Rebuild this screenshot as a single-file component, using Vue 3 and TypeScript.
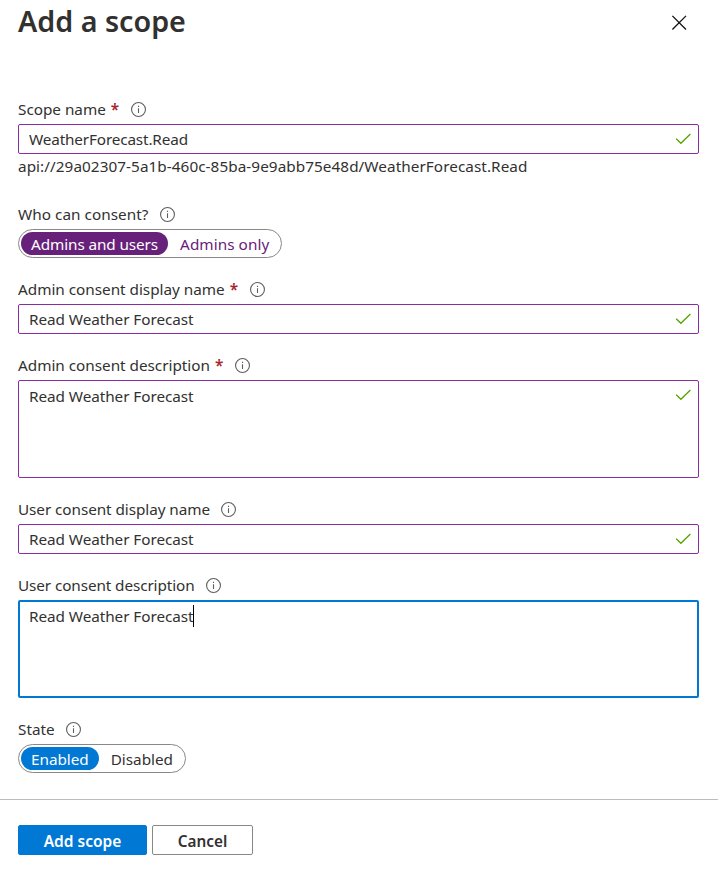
<script setup lang="ts">
import { ref } from 'vue'

interface Field {
  id: string
  label: string
  required?: boolean
  kind: 'input' | 'area' | 'toggle'
  value?: string
  valid?: boolean
  focused?: boolean
  hint?: string
  options?: string[]
}

const fields = ref<Field[]>([
  { id: 'scope-name', label: 'Scope name', required: true, kind: 'input', value: 'WeatherForecast.Read', valid: true, hint: 'api://29a02307-5a1b-460c-85ba-9e9abb75e48d/WeatherForecast.Read' },
  { id: 'consent', label: 'Who can consent?', kind: 'toggle', value: 'Admins and users', options: ['Admins and users', 'Admins only'] },
  { id: 'admin-name', label: 'Admin consent display name', required: true, kind: 'input', value: 'Read Weather Forecast', valid: true },
  { id: 'admin-description', label: 'Admin consent description', required: true, kind: 'area', value: 'Read Weather Forecast', valid: true },
  { id: 'user-name', label: 'User consent display name', kind: 'input', value: 'Read Weather Forecast', valid: true },
  { id: 'user-description', label: 'User consent description', kind: 'area', value: 'Read Weather Forecast', focused: true },
  { id: 'state', label: 'State', kind: 'toggle', value: 'Enabled', options: ['Enabled', 'Disabled'] },
])
</script>

<template>
  <main class="panel">
    <header class="header">
      <h1>Add a scope</h1>
      <svg class="close" viewBox="0 0 16 16"><path d="M1.4.9 15 14.5M15 .9 1.4 14.5" /></svg>
    </header>

    <form class="form">
      <section v-for="field in fields" :key="field.id" class="field" :class="field.id">
        <div class="label">
          <span class="caption">{{ field.label }}</span>
          <span v-if="field.required" class="required">*</span>
          <svg class="info" viewBox="0 0 15 15">
            <circle cx="7.5" cy="7.5" r="6.95" />
            <path d="M7.5 6.2V11M7.5 3.8V5" />
          </svg>
        </div>

        <div v-if="field.kind === 'toggle'" class="toggle">
          <button
            v-for="option in field.options"
            :key="option"
            type="button"
            class="option"
            :class="{ selected: option === field.value }"
            @click="field.value = option"
          >{{ option }}</button>
        </div>
        <div v-else class="control" :class="[field.kind, { focused: field.focused }]">
          <span class="value">{{ field.value }}</span>
          <span v-if="field.focused" class="caret"></span>
          <svg v-if="field.valid" class="check" viewBox="0 0 16 12"><path d="M1.2 5.8 5.9 10.3 15.4 1" /></svg>
        </div>

        <div v-if="field.hint" class="hint">{{ field.hint }}</div>
      </section>
    </form>

    <footer class="footer">
      <button type="button" class="button primary">Add scope</button>
      <button type="button" class="button">Cancel</button>
    </footer>
  </main>
</template>

<style>
body {
  background: #fff;
}
</style>

<style scoped>
.panel {
  box-sizing: border-box;
  height: 871px;
  overflow: hidden;
  color: #323130;
  font: 15.3px/20px "Noto Sans", "Open Sans", sans-serif;
}
.header {
  display: flex;
  justify-content: space-between;
  height: 96px;
  padding: 0 31px 0 18px;
  box-sizing: border-box;
}
h1 {
  margin: 1px 0 0;
  font-size: 28.7px;
  line-height: 40px;
  font-weight: 600;
}
.close {
  width: 16px;
  height: 16px;
  margin-top: 15px;
  fill: none;
  stroke: #111;
  stroke-width: 1.3;
}
.form {
  display: flex;
  flex-direction: column;
  height: 703px;
  padding: 0 19px 0 18px;
  box-sizing: border-box;
}
.field {
  margin-bottom: 18px;
}
.scope-name {
  margin-bottom: 26px;
}
.label {
  display: flex;
  align-items: center;
  box-sizing: border-box;
  height: 28px;
  padding-bottom: 2px;
  letter-spacing: -0.02px;
}
.consent .label {
  letter-spacing: 0.04px;
}
.user-name .label {
  letter-spacing: -0.07px;
}
.user-description .label {
  letter-spacing: -0.1px;
}
.required {
  margin-left: 5px;
  color: #a4262c;
  font-weight: 600;
}
.info {
  width: 15px;
  height: 15px;
  margin-left: 11px;
  fill: none;
  stroke: #605e5c;
  stroke-width: 1.1;
}
.required + .info {
  margin-left: 12px;
}
.scope-name .info {
  margin-left: 11.5px;
}
.control {
  display: flex;
  align-items: flex-start;
  box-sizing: border-box;
  height: 30px;
  padding: 4px 7px 0 10px;
  border: 1px solid #8a2da5;
  border-radius: 2px;
}
.control.area {
  height: 98px;
  padding-top: 5px;
}
.control.area.focused {
  padding: 4px 6px 0 9px;
  border: 2px solid #0078d4;
}
.value {
  letter-spacing: -0.06px;
}
.scope-name .value {
  letter-spacing: -0.15px;
}
.caret {
  width: 1px;
  height: 22px;
  margin: -1px 0 0;
  background: #000;
}
.check {
  width: 16px;
  height: 12px;
  margin: 4px 0 0 auto;
  fill: none;
  stroke: #57a300;
  stroke-width: 1.3;
}
.area .check {
  margin-top: 3px;
}
.hint {
  height: 21px;
  line-height: 24px;
  letter-spacing: 0.06px;
}
.toggle {
  display: flex;
  gap: 2px;
  box-sizing: border-box;
  width: fit-content;
  height: 29px;
  padding: 2px;
  border: 1px solid #8a8886;
  border-radius: 15px;
}
.option {
  height: 23px;
  padding: 1px 10px 0;
  border: 0;
  border-radius: 12px;
  background: none;
  color: #323130;
  font: inherit;
  letter-spacing: -0.03px;
  line-height: 23px;
}
.consent .option {
  color: #68217a;
  letter-spacing: 0.05px;
}
.consent .option.selected {
  background: #68217a;
  color: #fff;
  letter-spacing: -0.1px;
}
.state .option.selected {
  background: #0078d4;
  color: #fff;
}
.footer {
  display: flex;
  gap: 5px;
  padding: 25px 18px 0;
  border-top: 1px solid #bebbb8;
}
.button {
  box-sizing: border-box;
  width: 101px;
  height: 30px;
  padding: 1px 0 0;
  border: 1px solid #8a8886;
  border-radius: 2px;
  background: #fff;
  color: #323130;
  font: inherit;
  font-weight: 600;
}
.primary {
  width: 129px;
  border-color: #0078d4;
  background: #0078d4;
  color: #fff;
  font-size: 15.5px;
}
</style>
